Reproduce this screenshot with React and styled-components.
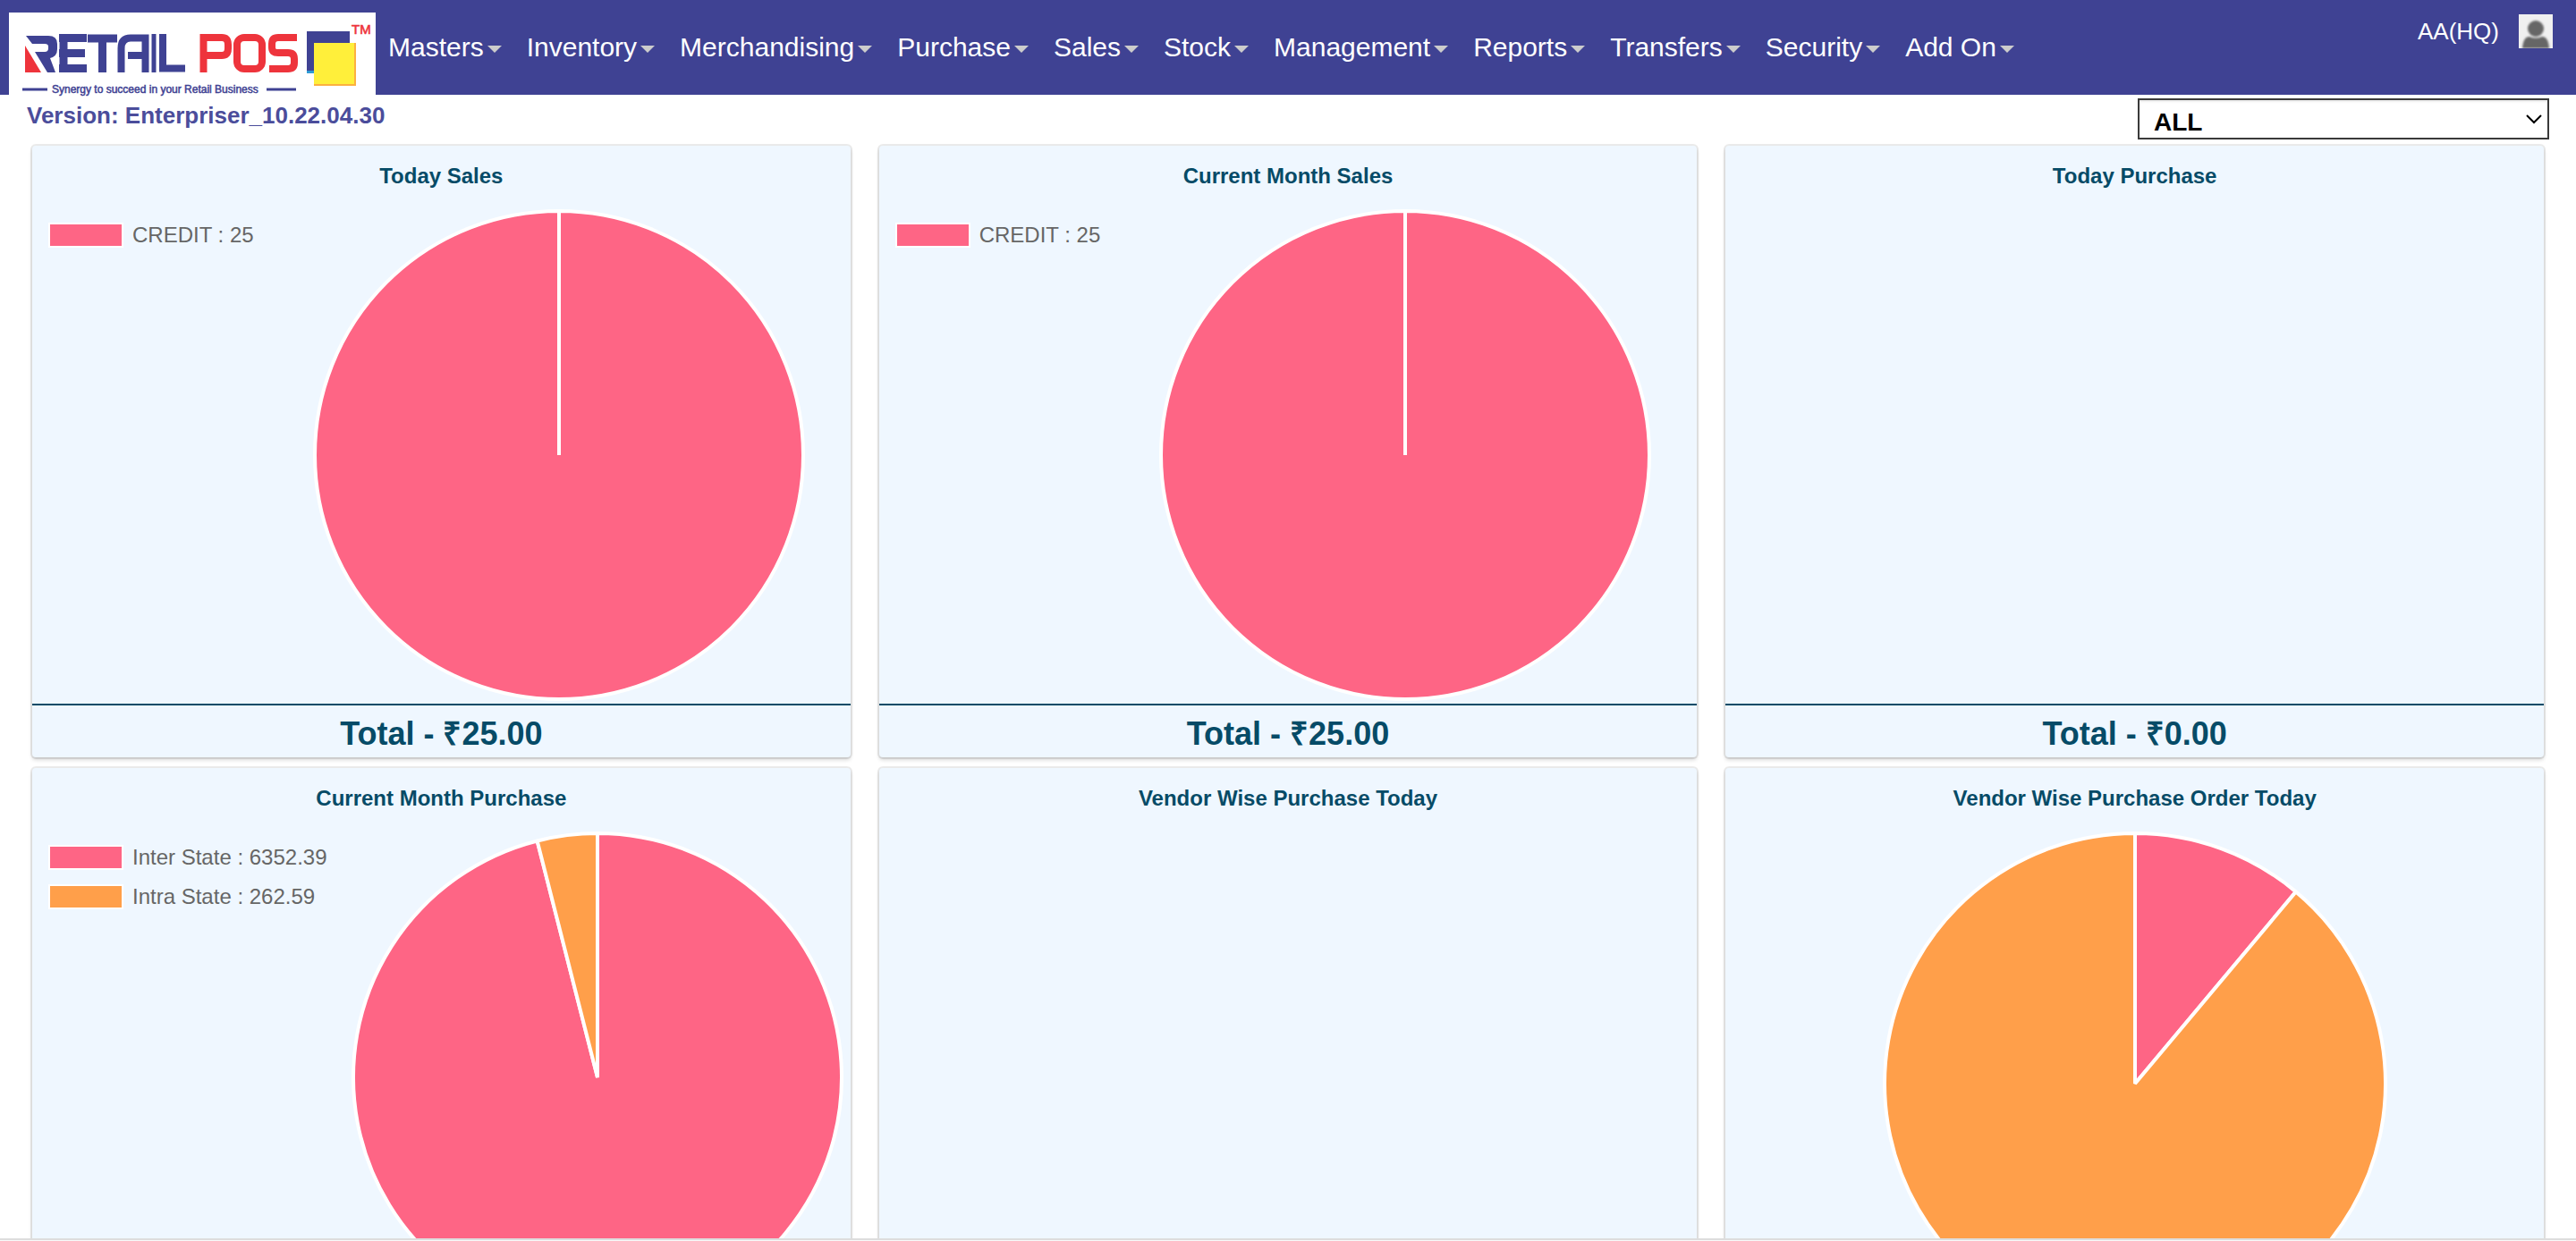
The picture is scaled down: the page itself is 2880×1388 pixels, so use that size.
import React from "react";
import styled, { createGlobalStyle } from "styled-components";

const GlobalStyle = createGlobalStyle`
  *, *::before, *::after { box-sizing: border-box; }
  html, body { height: 100%; }
  body {
    margin: 0;
    overflow: hidden;
    background: #fff;
    font-family: "Liberation Sans", Arial, Helvetica, sans-serif;
  }
  #root { height: 100%; }
`;

const Page = styled.div`
  display: flex;
  flex-direction: column;
  height: 100vh;
`;

const Header = styled.header`
  display: flex;
  align-items: flex-start;
  height: 106px;
  flex: none;
  padding: 0 26px 0 10px;
  background: #3f4293;
`;

const Logo = styled.a`
  display: block;
  width: 410px;
  height: 96px;
  margin-top: 14px;
  background: #fff;
  svg { display: block; }
`;

const Nav = styled.nav`
  display: flex;
  flex: 1;
  gap: 28px;
  margin-left: 14px;
`;

const NavItem = styled.button`
  display: flex;
  align-items: center;
  gap: 4px;
  height: 106px;
  padding: 0;
  border: 0;
  background: none;
  color: #fff;
  font: 30px "Liberation Sans", Arial, sans-serif;
`;

const Caret = styled.span`
  width: 0;
  height: 0;
  margin-top: 4px;
  border: 8px solid transparent;
  border-top-color: #ccc;
  border-bottom-width: 0;
`;

const User = styled.div`
  display: flex;
  align-items: center;
  gap: 22px;
  margin-top: 16px;
  color: #fff;
  font-size: 26px;
  line-height: 38px;
`;

const SubBar = styled.div`
  display: flex;
  justify-content: space-between;
  align-items: flex-start;
  flex: none;
  padding: 4px 30px 5px;
`;

const Version = styled.strong`
  color: #4b4d9b;
  font-size: 26px;
  line-height: 38px;
`;

const SelectWrap = styled.label`
  display: grid;
  align-items: center;
  width: 460px;
  height: 46px;
  & > * { grid-area: 1 / 1; }
  svg { justify-self: end; margin-right: 8px; pointer-events: none; z-index: 1; }
`;

const BranchSelect = styled.select`
  appearance: none;
  width: 100%;
  height: 100%;
  padding: 6px 16px 0;
  border: 2px solid #3a3a3a;
  border-radius: 0;
  background: #fff;
  box-shadow: inset 0 2px 2px rgba(0, 0, 0, 0.08);
  color: #000;
  font: bold 28px "Liberation Sans", Arial, sans-serif;
`;

const Grid = styled.main`
  display: grid;
  grid-template-columns: repeat(3, minmax(0, 1fr));
  grid-auto-rows: max-content;
  gap: 12px 32px;
  flex: 1;
  min-height: 0;
  overflow: hidden;
  padding: 2px 36px 0;
`;

const Card = styled.section`
  display: flex;
  flex-direction: column;
  border-radius: 4px;
  background: #eff7ff;
  box-shadow: 0 3px 4px rgba(0, 0, 0, 0.16), 0 0 0 2px rgba(0, 0, 0, 0.08);
`;

const CardTitle = styled.h2`
  margin: 0;
  padding-top: 20px;
  color: #064b67;
  font-size: 24px;
  line-height: 28px;
  text-align: center;
`;

const CardBody = styled.div`
  display: flex;
  justify-content: ${(p) => (p.$centered ? "center" : "space-between")};
  height: 576px;
  padding: 23px ${(p) => p.$right}px 0 18px;
`;

const Legend = styled.ul`
  display: flex;
  flex-direction: column;
  gap: 20px;
  margin: 0;
  padding: 17px 0 0;
  list-style: none;
`;

const LegendItem = styled.li`
  display: flex;
  align-items: center;
  gap: 10px;
  color: #666;
  font-size: 24px;
  line-height: 24px;
  white-space: nowrap;
`;

const Swatch = styled.span`
  width: 84px;
  height: 28px;
  margin: -2px 0;
  border: 2px solid #fff;
  background: ${(p) => p.$color};
`;

const Total = styled.div`
  height: 60px;
  border-top: 2px solid #064b67;
  color: #064b67;
  font-size: 36px;
  font-weight: bold;
  line-height: 64px;
  text-align: center;
`;

const StatusBar = styled.footer`
  flex: none;
  height: 3px;
  border-top: 2px solid #ddd;
  background: #f8f8f8;
`;

const PINK = "#fe6585";
const ORANGE = "#ff9f4a";

function Pie({ slices, radius }) {
  const size = radius * 2 + 4;
  const c = size / 2;
  const sum = slices.reduce((a, s) => a + s.value, 0);
  const point = (t) => {
    const a = t * 2 * Math.PI;
    return `${c + radius * Math.sin(a)} ${c - radius * Math.cos(a)}`;
  };
  let start = 0;
  return (
    <svg width={size} height={size} role="img" aria-label="Pie chart">
      {slices.map((s) => {
        const from = start / sum;
        start += s.value;
        const to = start / sum;
        const mid = (from + to) / 2;
        const large = to - from > 0.5;
        const arc = `A${radius} ${radius} 0 0 1`;
        const d = large
          ? `M${c} ${c}L${point(from)}${arc} ${point(mid)}${arc} ${point(to)}Z`
          : `M${c} ${c}L${point(from)}${arc} ${point(to)}Z`;
        return <path key={s.color} d={d} fill={s.color} stroke="#fff" strokeWidth="4" strokeLinejoin="bevel" />;
      })}
    </svg>
  );
}

const MENUS = ["Masters", "Inventory", "Merchandising", "Purchase", "Sales", "Stock", "Management", "Reports", "Transfers", "Security", "Add On"];

const CARDS = [
  { title: "Today Sales", total: "₹25.00", right: 51, radius: 273, legend: true, slices: [{ label: "CREDIT", value: 25, color: PINK }] },
  { title: "Current Month Sales", total: "₹25.00", right: 51, radius: 273, legend: true, slices: [{ label: "CREDIT", value: 25, color: PINK }] },
  { title: "Today Purchase", total: "₹0.00", slices: [] },
  {
    title: "Current Month Purchase", right: 8, radius: 273, legend: true,
    slices: [{ label: "Inter State", value: 6352.39, color: PINK }, { label: "Intra State", value: 262.59, color: ORANGE }],
  },
  { title: "Vendor Wise Purchase Today", slices: [] },
  {
    title: "Vendor Wise Purchase Order Today", radius: 280,
    slices: [{ value: 11.1, color: PINK }, { value: 88.9, color: ORANGE }],
  },
];

function BrandLogo() {
  return (
    <svg width="410" height="96" viewBox="10 14 410 96" aria-label="Retail POS">
      <g fill="none" stroke="#3f4293">
        <path d="M71 38V81M66 42.500H97M66 59.500H95M66 76.500H97" strokeWidth="9" />
        <path d="M98 43H131M114.500 43V81" strokeWidth="9" />
        <path d="M135.500 81V54Q135.500 42.500 146 42.500H162.500V81M143 62H162" strokeWidth="8" />
        <path d="M172 38V81" strokeWidth="5" />
        <path d="M182 38V76.500H207" strokeWidth="8" />
      </g>
      <path
        d="M29 40H54Q64 40 64 49V55Q64 63 56 65L62 81H53L39 58H50Q54 58 54 54V52Q54 49 50 49H36Z"
        fill="#3f4293"
      />
      <path d="M28 51V81H46Z" fill="#ee343c" />
      <g fill="none" stroke="#ee343c" strokeWidth="8">
        <path d="M227.500 81V42H248Q255 42 255 50V54Q255 62 248 62H229" />
        <rect x="265" y="42" width="28" height="35" rx="8" />
        <path d="M332 42H311Q304 42 304 49V53Q304 59 311 59H322Q329 59 329 66V70Q329 77 322 77H301" />
      </g>
      <rect x="343" y="35" width="48" height="46" fill="#3f4293" />
      <rect x="343" y="79" width="9" height="3" fill="#2e9bd6" />
      <rect x="351" y="48" width="46" height="47" fill="#ffef3a" />
      <path d="M397 48V95H351" fill="none" stroke="#fcb040" strokeWidth="2" />
      <path d="M25 100H53M298 100H331" stroke="#3f4293" strokeWidth="3" />
      <text x="58" y="104" fill="#3f4293" stroke="#3f4293" strokeWidth="0.5" fontSize="12" fontFamily="Liberation Sans, sans-serif">Synergy to succeed in your Retail Business</text>
      <text x="393" y="38" fill="#ee343c" stroke="#ee343c" strokeWidth="0.6" fontSize="15" fontFamily="Liberation Sans, sans-serif">TM</text>
    </svg>
  );
}

function Avatar() {
  return (
    <svg width="38" height="38" viewBox="0 0 38 38" role="img" aria-label="User">
      <defs>
        <filter id="soft"><feGaussianBlur stdDeviation="0.8" /></filter>
      </defs>
      <rect width="38" height="38" fill="#f0f0f0" />
      <g fill="#666" filter="url(#soft)">
        <circle cx="19" cy="16" r="9" />
        <path d="M4 38Q5 25 12 25Q19 28 26 25Q33 25 34 38Z" />
      </g>
    </svg>
  );
}

export default function App() {
  return (
    <Page>
      <GlobalStyle />
      <Header>
        <Logo href="#"><BrandLogo /></Logo>
        <Nav>
          {MENUS.map((m) => (
            <NavItem key={m} type="button">{m}<Caret /></NavItem>
          ))}
        </Nav>
        <User>AA(HQ)<Avatar /></User>
      </Header>
      <SubBar>
        <Version>Version: Enterpriser_10.22.04.30</Version>
        <SelectWrap>
          <BranchSelect aria-label="Branch" defaultValue="ALL"><option>ALL</option></BranchSelect>
          <svg width="18" height="11" viewBox="0 0 18 11"><path d="M1 1L9 9L17 1" fill="none" stroke="#000" strokeWidth="2" /></svg>
        </SelectWrap>
      </SubBar>
      <Grid>
        {CARDS.map((c) => (
          <Card key={c.title}>
            <CardTitle>{c.title}</CardTitle>
            <CardBody $centered={!c.legend} $right={c.right ?? 18}>
              {c.legend && (
                <Legend>
                  {c.slices.map((s) => (
                    <LegendItem key={s.label}><Swatch $color={s.color} />{`${s.label} : ${s.value}`}</LegendItem>
                  ))}
                </Legend>
              )}
              {c.slices.length > 0 && <Pie slices={c.slices} radius={c.radius} />}
            </CardBody>
            {c.total && <Total>Total - {c.total}</Total>}
          </Card>
        ))}
      </Grid>
      <StatusBar />
    </Page>
  );
}
